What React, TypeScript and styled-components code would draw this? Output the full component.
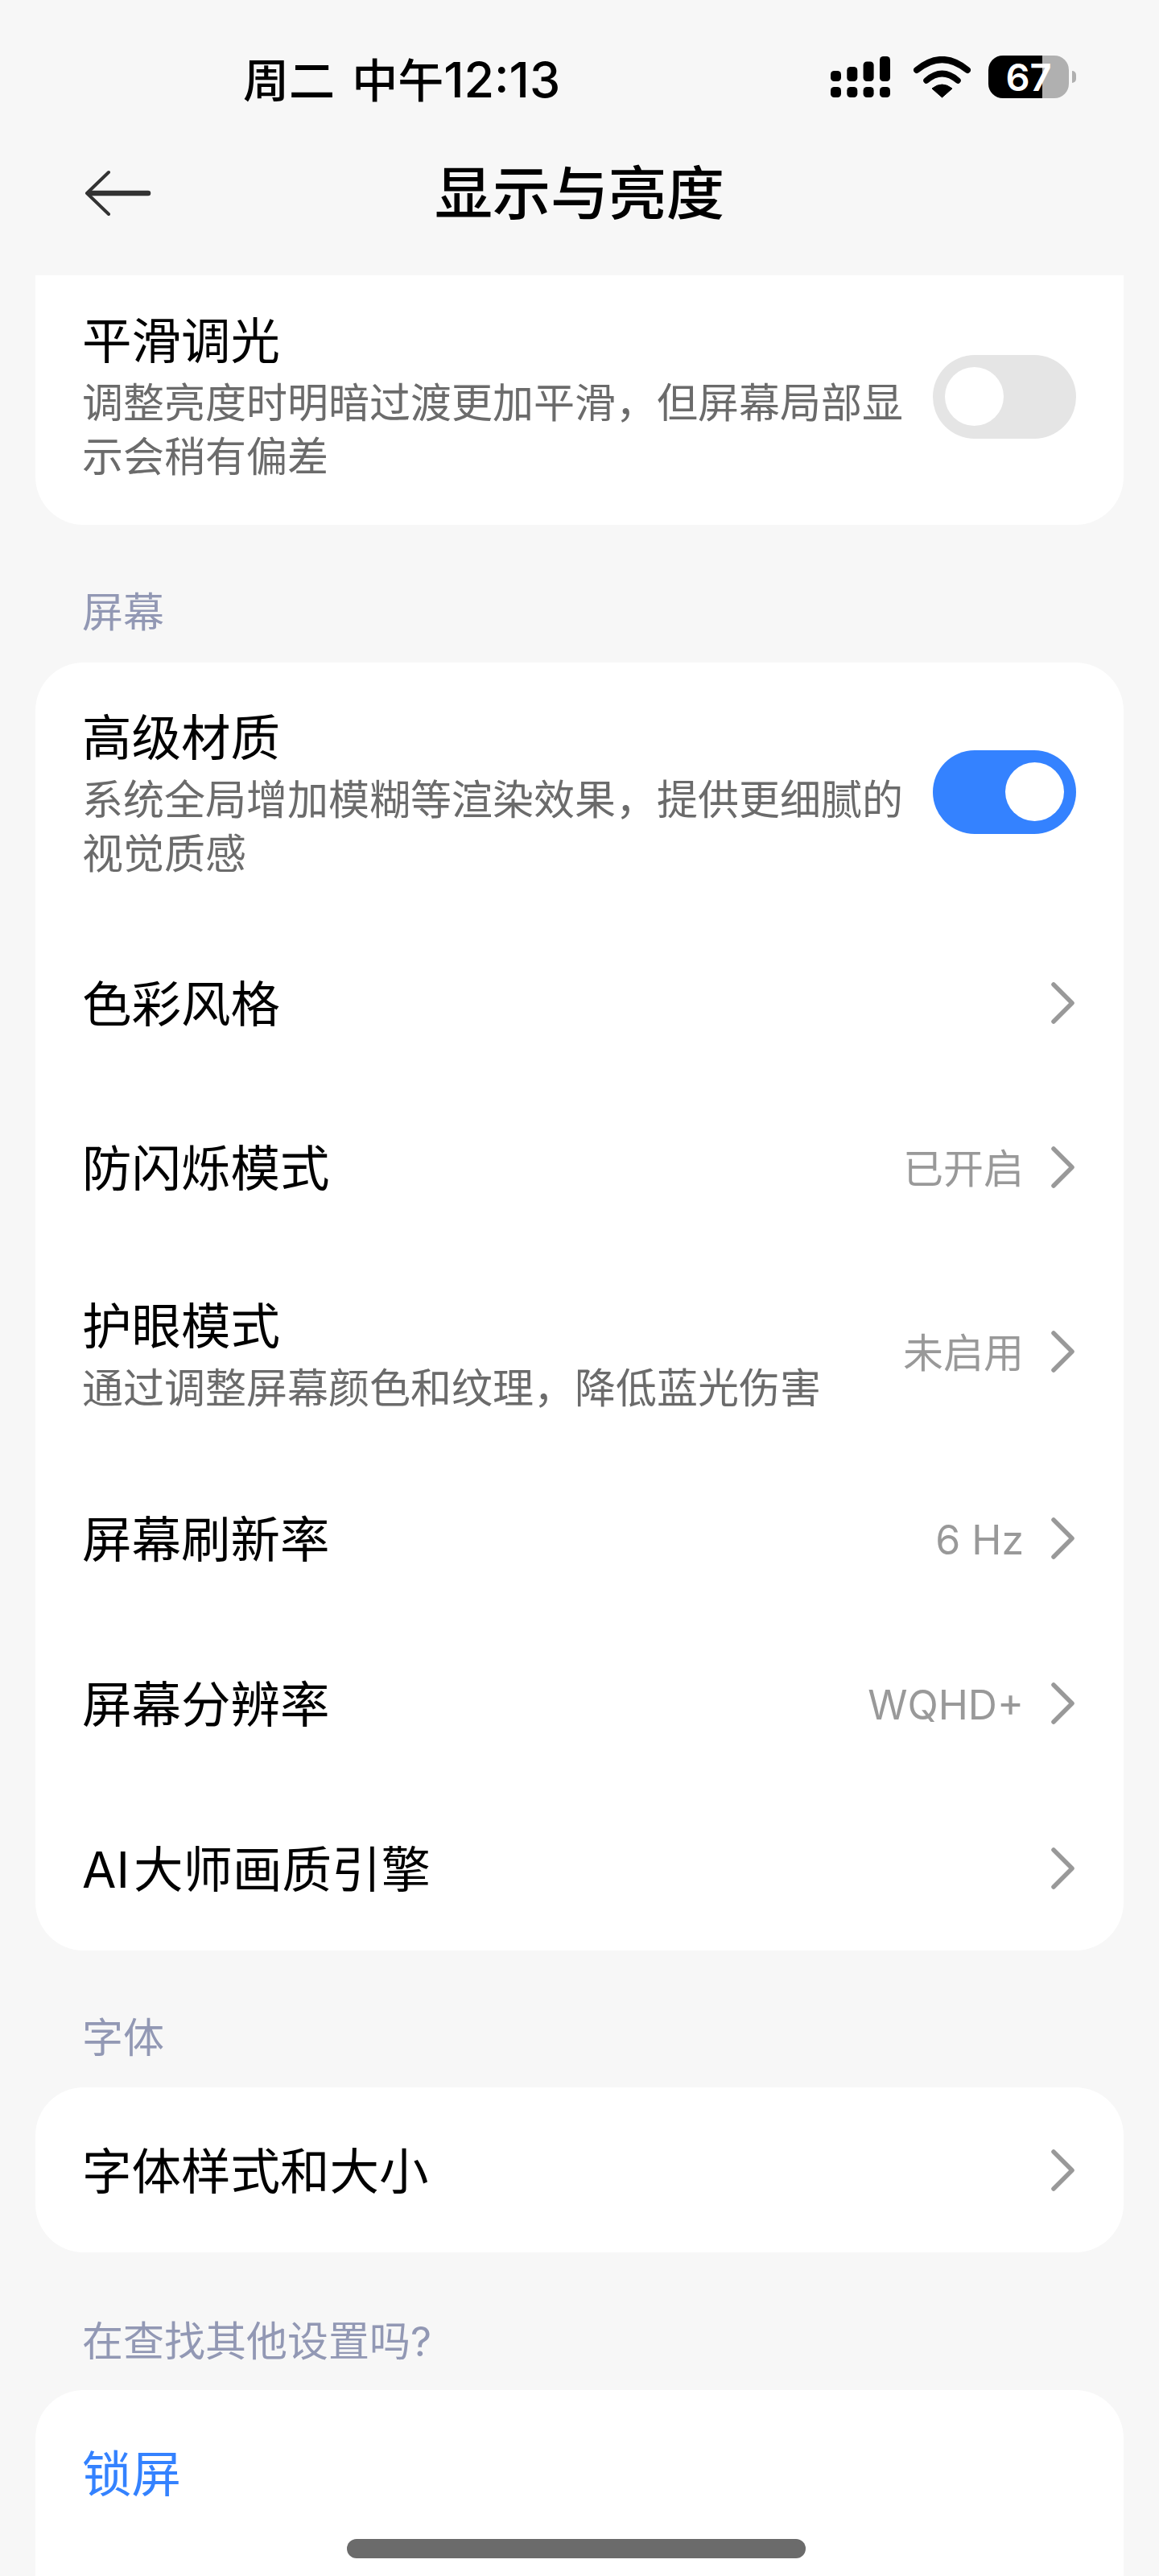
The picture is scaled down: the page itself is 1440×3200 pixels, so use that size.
import React from "react";
import styled, { createGlobalStyle } from "styled-components";

const Global = createGlobalStyle`
  html, body { margin: 0; padding: 0; background: #f7f7f7; }
  body { font-family: "Inter", "Noto Sans CJK SC", "Noto Sans", sans-serif; }
  * { box-sizing: border-box; }
`;

const Page = styled.div`
  position: relative;
  width: 1440px;
  height: 3200px;
  overflow: hidden;
  background: #f7f7f7;
  color: #000;
`;

const StatusBar = styled.div`
  height: 138px;
  padding: 59px 103px 0 302px;
  display: flex;
  justify-content: space-between;
  align-items: flex-start;
`;

const Clock = styled.div`
  font-size: 57px;
  line-height: 80px;
  white-space: pre;
  word-spacing: 6px;
  font-weight: 500;
`;

const ClockDigits = styled.span`
  font-size: 61px;
`;

const StatusIcons = styled.div`
  display: flex;
  align-items: center;
  height: 53px;
  margin-top: 10px;
`;

const SignalIcon = styled.svg`
  width: 74px;
  height: 51px;
  margin-right: 29px;
  display: block;
`;

const WifiIcon = styled.svg`
  width: 71px;
  height: 52px;
  margin-right: 22px;
  display: block;
`;

const Battery = styled.div`
  width: 100px;
  height: 53px;
  border-radius: 18px;
  background: linear-gradient(90deg, #000 0 67%, #b0b0b0 67% 100%);
  color: #fff;
  font-weight: 600;
  font-size: 47px;
  line-height: 53px;
  display: flex;
  align-items: center;
  justify-content: center;
`;

const BatteryNub = styled.div`
  width: 5px;
  height: 15px;
  margin-left: 4px;
  border-radius: 0 5px 5px 0;
  background: #b0b0b0;
`;

const Nav = styled.div`
  height: 204px;
  padding-left: 104px;
  display: grid;
  grid-template-columns: 1fr auto 1fr;
  align-items: center;
`;

const BackIcon = styled.svg`
  width: 84px;
  height: 58px;
  display: block;
`;

const NavTitle = styled.div`
  font-size: 72px;
  line-height: 100px;
  font-weight: 500;
  margin-left: -104px;
`;

const Card = styled.div<{ $flat?: boolean; $tail?: boolean }>`
  margin: 0 44px;
  background: #fff;
  border-radius: ${(p) => (p.$flat ? "0 0 60px 60px" : p.$tail ? "60px 60px 0 0" : "60px")};
  ${(p) => (p.$tail ? "height: 240px;" : "")}
`;

const SectionLabel = styled.div<{ $top: number; $bottom: number }>`
  padding: ${(p) => p.$top}px 0 ${(p) => p.$bottom}px 102px;
  font-size: 51px;
  line-height: 70px;
  color: #9298b4;
`;

const Row = styled.div<{ $top?: number; $bottom?: number; $height?: number }>`
  display: flex;
  align-items: center;
  justify-content: space-between;
  padding: ${(p) => p.$top ?? 0}px 59px ${(p) => p.$bottom ?? 0}px 58px;
  ${(p) => (p.$height ? `height: ${p.$height}px;` : "")}
`;

const RowText = styled.div`
  max-width: 1030px;
`;

const Title = styled.div<{ $accent?: boolean; $drop?: boolean }>`
  font-size: 61.5px;
  line-height: 80px;
  color: ${(p) => (p.$accent ? "#3482ff" : "#000")};
  ${(p) => (p.$drop ? "margin-top: 4px;" : "")}
`;

const LatinPrefix = styled.span`
  margin-right: 5px;
`;

const Sub = styled.div`
  margin-top: 4px;
  font-size: 51px;
  line-height: 66.5px;
  color: #6b6b6b;
`;

const RowRight = styled.div<{ $lift?: number }>`
  display: flex;
  align-items: center;
  margin-bottom: ${(p) => p.$lift ?? 0}px;
`;

const Value = styled.div`
  font-size: 50px;
  line-height: 70px;
  color: #999;
  margin: 4px 33px 0 0;
  white-space: nowrap;
`;

const ChevronIcon = styled.svg`
  width: 30px;
  height: 52px;
  display: block;
  margin-right: 2px;
`;

const Toggle = styled.div<{ $on?: boolean }>`
  width: 178px;
  height: 104px;
  flex: none;
  border-radius: 52px;
  padding: 0 15px;
  display: flex;
  align-items: center;
  justify-content: ${(p) => (p.$on ? "flex-end" : "flex-start")};
  background: ${(p) => (p.$on ? "#3482ff" : "#e5e5e5")};
  margin-bottom: ${(p) => (p.$on ? "4px" : "0")};
`;

const Knob = styled.div`
  width: 73px;
  height: 73px;
  border-radius: 50%;
  background: #fff;
`;

const HomeIndicator = styled.div`
  position: absolute;
  left: 431px;
  top: 3154px;
  width: 570px;
  height: 24px;
  border-radius: 12px;
  background: #6b6b6b;
`;

const Chevron = () => (
  <ChevronIcon viewBox="0 0 30 52" fill="none">
    <path d="M4 3 L27 26 L4 49" stroke="#999" strokeWidth="5.5" strokeLinecap="round" strokeLinejoin="round" />
  </ChevronIcon>
);

const signalBars = [
  { x: 0, top: 18 },
  { x: 20.3, top: 13 },
  { x: 40.6, top: 6.5 },
  { x: 61, top: 0 },
];

const NavRow = ({ title, value, height }: { title: React.ReactNode; value?: string; height?: number }) => (
  <Row $height={height}>
    <Title $drop>{title}</Title>
    <RowRight>
      {value ? <Value>{value}</Value> : null}
      <Chevron />
    </RowRight>
  </Row>
);

export default function App() {
  return (
    <Page>
      <Global />
      <StatusBar>
        <Clock>
          周二 中午<ClockDigits>12:13</ClockDigits>
        </Clock>
        <StatusIcons>
          <SignalIcon viewBox="0 0 74 51">
            {signalBars.map((b) => (
              <g key={b.x} fill="#000">
                <rect x={b.x} y={b.top} width="13" height={31 - b.top} rx="4.5" />
                <rect x={b.x} y="38" width="13" height="13" rx="4.5" />
              </g>
            ))}
          </SignalIcon>
          <WifiIcon viewBox="0 0 71 52" fill="none">
            <path d="M4 17 Q35.5 -9 67 17" stroke="#000" strokeWidth="8" strokeLinecap="round" />
            <path d="M16 30 Q35.5 13 55 30" stroke="#000" strokeWidth="7.5" strokeLinecap="round" />
            <path d="M35.5 51 L23 40 Q35.5 30 48 40 Z" fill="#000" stroke="#000" strokeWidth="1" strokeLinejoin="round" />
          </WifiIcon>
          <Battery>67</Battery>
          <BatteryNub />
        </StatusIcons>
      </StatusBar>
      <Nav>
        <BackIcon viewBox="0 0 84 58" fill="none">
          <path d="M31 3 L4 29 L31 55" stroke="#333" strokeWidth="4" strokeLinecap="round" strokeLinejoin="round" />
          <path d="M7 29 H80" stroke="#333" strokeWidth="6.5" strokeLinecap="round" />
        </BackIcon>
        <NavTitle>显示与亮度</NavTitle>
      </Nav>

      <Card $flat>
        <Row $top={42} $bottom={51}>
          <RowText>
            <Title>平滑调光</Title>
            <Sub>调整亮度时明暗过渡更加平滑，但屏幕局部显示会稍有偏差</Sub>
          </RowText>
          <Toggle>
            <Knob />
          </Toggle>
        </Row>
      </Card>

      <SectionLabel $top={74} $bottom={27}>屏幕</SectionLabel>
      <Card>
        <Row $top={54} $bottom={50}>
          <RowText>
            <Title>高级材质</Title>
            <Sub>系统全局增加模糊等渲染效果，提供更细腻的视觉质感</Sub>
          </RowText>
          <Toggle $on>
            <Knob />
          </Toggle>
        </Row>
        <NavRow title="色彩风格" height={204} />
        <NavRow title="防闪烁模式" value="已开启" height={204} />
        <Row $top={56} $bottom={49.5}>
          <RowText>
            <Title>护眼模式</Title>
            <Sub>通过调整屏幕颜色和纹理，降低蓝光伤害</Sub>
          </RowText>
          <RowRight $lift={8}>
            <Value>未启用</Value>
            <Chevron />
          </RowRight>
        </Row>
        <NavRow title="屏幕刷新率" value="6 Hz" height={205} />
        <NavRow title="屏幕分辨率" value="WQHD+" height={205} />
        <NavRow title={<><LatinPrefix>AI</LatinPrefix>大师画质引擎</>} height={205} />
      </Card>

      <SectionLabel $top={74} $bottom={26}>字体</SectionLabel>
      <Card>
        <NavRow title="字体样式和大小" height={205} />
      </Card>

      <SectionLabel $top={76} $bottom={25}>在查找其他设置吗?</SectionLabel>
      <Card $tail>
        <Row $top={65}>
          <Title $accent>锁屏</Title>
        </Row>
      </Card>
      <HomeIndicator />
    </Page>
  );
}
